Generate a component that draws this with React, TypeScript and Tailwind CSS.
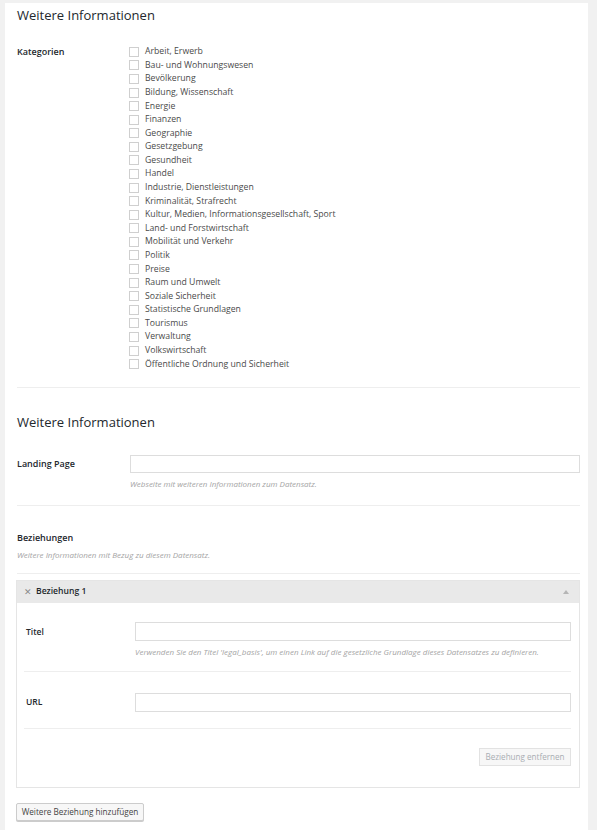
const categories = [
  "Arbeit, Erwerb",
  "Bau- und Wohnungswesen",
  "Bevölkerung",
  "Bildung, Wissenschaft",
  "Energie",
  "Finanzen",
  "Geographie",
  "Gesetzgebung",
  "Gesundheit",
  "Handel",
  "Industrie, Dienstleistungen",
  "Kriminalität, Strafrecht",
  "Kultur, Medien, Informationsgesellschaft, Sport",
  "Land- und Forstwirtschaft",
  "Mobilität und Verkehr",
  "Politik",
  "Preise",
  "Raum und Umwelt",
  "Soziale Sicherheit",
  "Statistische Grundlagen",
  "Tourismus",
  "Verwaltung",
  "Volkswirtschaft",
  "Öffentliche Ordnung und Sicherheit",
];

const Divider = () => <div className="h-px bg-[#eeeeee]" />;

const Helper = ({ text }: { text: string }) => (
  <p className="mt-[6px] h-[10px] text-[8px] leading-[10px] italic text-[#a4a4a4]">{text}</p>
);

const App = () => {
  return (
    <div
      className="w-[597px] h-[830px] overflow-hidden bg-[#f1f1f1] pt-[3px] pl-[5px] text-[#32373c]"
      style={{ fontFamily: '"Open Sans", "Noto Sans", sans-serif' }}
    >
      <div className="w-[583px] h-[827px] bg-white pt-[2px] pl-[12px] pr-[8px]">
        <h2 className="h-[20px] text-[13px] leading-[20px] text-[#23282d]">Weitere Informationen</h2>

        <div className="mt-[20px] flex">
          <div className="w-[112px] text-[9px] font-semibold leading-[13.6px] text-[#23282d]">Kategorien</div>
          <ul className="flex flex-col">
            {categories.map((c) => (
              <li key={c} className="flex h-[13.58px] items-center gap-[6px] text-[8.7px] text-[#4a4a4a]">
                <span className="h-[10px] w-[10px] shrink-0 border border-[#cfcfcf] bg-white" />
                {c}
              </li>
            ))}
          </ul>
        </div>

        <div className="mt-[16px]">
          <Divider />
        </div>

        <h2 className="mt-[24px] h-[20px] text-[13px] leading-[20px] text-[#23282d]">Weitere Informationen</h2>

        <div className="mt-[23px] flex">
          <div className="w-[113px] pt-[3px] text-[9px] font-semibold leading-[12px] text-[#23282d]">Landing Page</div>
          <div className="flex-1">
            <input className="block h-[18px] w-full border border-[#dddddd] bg-white outline-none" />
            <Helper text="Webseite mit weiteren Informationen zum Datensatz." />
          </div>
        </div>

        <div className="mt-[16px]">
          <Divider />
        </div>

        <div className="mt-[26px] h-[12px] text-[9px] font-semibold leading-[12px] text-[#23282d]">Beziehungen</div>
        <Helper text="Weitere Informationen mit Bezug zu diesem Datensatz." />

        <div className="mt-[13px]">
          <Divider />
        </div>

        <div className="mt-[6px] -ml-px border border-[#e5e5e5]">
          <div className="flex h-[22px] items-center bg-[#e9e9e9] pl-[7px] pr-[10px]">
            <span className="text-[8.5px] leading-none text-[#8a8a8a]">✕</span>
            <span className="ml-[4px] text-[8.6px] font-semibold text-[#23282d]">Beziehung 1</span>
            <span className="ml-auto h-0 w-0 border-x-[3px] border-b-[4px] border-x-transparent border-b-[#b5b5b5]" />
          </div>

          <div className="pl-[7px] pr-[8px]">
            <div className="mt-[19.5px] flex">
              <div className="w-[111px] pl-[2px] pt-[4px] text-[8.5px] font-semibold leading-[12px] text-[#23282d]">Titel</div>
              <div className="flex-1">
                <input className="block h-[19px] w-full border border-[#dddddd] bg-white outline-none" />
                <Helper text="Verwenden Sie den Titel 'legal_basis', um einen Link auf die gesetzliche Grundlage dieses Datensatzes zu definieren." />
              </div>
            </div>

            <div className="mt-[14px]">
              <Divider />
            </div>

            <div className="mt-[21px] flex">
              <div className="w-[111px] pl-[2px] pt-[3px] text-[8.5px] font-semibold leading-[12px] text-[#23282d]">URL</div>
              <input className="block h-[19px] flex-1 border border-[#dddddd] bg-white outline-none" />
            </div>

            <div className="mt-[16px]">
              <Divider />
            </div>

            <div className="mt-[19px] flex justify-end">
              <button className="h-[18px] w-[92px] border border-[#e2e2e2] bg-[#f7f7f7] text-[8.1px] text-[#a8adb2]">
                Beziehung entfernen
              </button>
            </div>
            <div className="h-[21px]" />
          </div>
        </div>

        <button className="mt-[15px] -ml-px h-[18px] w-[128px] rounded-[2px] border border-[#cccccc] bg-[#f7f7f7] text-[8.2px] text-[#444] shadow-[0_1px_0_#ccc]">
          Weitere Beziehung hinzufügen
        </button>
      </div>
    </div>
  );
};

export default App;
